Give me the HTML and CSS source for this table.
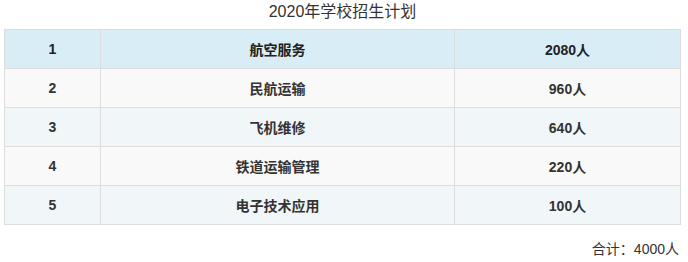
FILE: index.html
```html
<!DOCTYPE html>
<html lang="zh-CN">
<head>
    <meta charset="UTF-8">
    <meta name="viewport" content="width=device-width, initial-scale=1.0">
    <title>2020年学校招生计划</title>
    <link rel="stylesheet" href="styles.css">
</head>
<body>
    <div class="plan">
        <div class="plan-title">2020年学校招生计划</div>

        <table class="plan-table">
            <tr class="row-head">
                <td class="col-no">1</td>
                <td class="col-name">航空服务</td>
                <td class="col-num">2080人</td>
            </tr>
            <tr class="row-odd">
                <td class="col-no">2</td>
                <td class="col-name">民航运输</td>
                <td class="col-num">960人</td>
            </tr>
            <tr class="row-even">
                <td class="col-no">3</td>
                <td class="col-name">飞机维修</td>
                <td class="col-num">640人</td>
            </tr>
            <tr class="row-odd">
                <td class="col-no">4</td>
                <td class="col-name">铁道运输管理</td>
                <td class="col-num">220人</td>
            </tr>
            <tr class="row-even">
                <td class="col-no">5</td>
                <td class="col-name">电子技术应用</td>
                <td class="col-num">100人</td>
            </tr>
        </table>

        <div class="plan-total">合计：4000人</div>
    </div>
</body>
</html>
```

FILE: styles.css
```css
body {
    margin: 0;
    background: #fff;
    font-family: "Liberation Sans", "Noto Sans CJK SC", sans-serif;
    color: #333;
}

.plan {
    width: 677px;
    padding-left: 4px;
}

.plan-title {
    height: 29px;
    line-height: 24px;
    font-size: 16px;
    text-align: center;
    color: #333;
}

.plan-table {
    width: 677px;
    border-collapse: collapse;
    font-size: 14px;
    font-weight: bold;
}

.plan-table td {
    height: 38px;
    padding: 0;
    border: 1px solid #ddd;
    text-align: center;
    vertical-align: middle;
}

.col-no {
    width: 95px;
}

.col-name {
    width: 353px;
}

.row-head td {
    background: #d9edf7;
    color: #222;
}

.row-odd td {
    background: #f9f9f9;
}

.row-even td {
    background: #f1f6f9;
}

.plan-total {
    margin-top: 14px;
    line-height: 20px;
    font-size: 14px;
    text-align: right;
    padding-right: 2px;
}
```
